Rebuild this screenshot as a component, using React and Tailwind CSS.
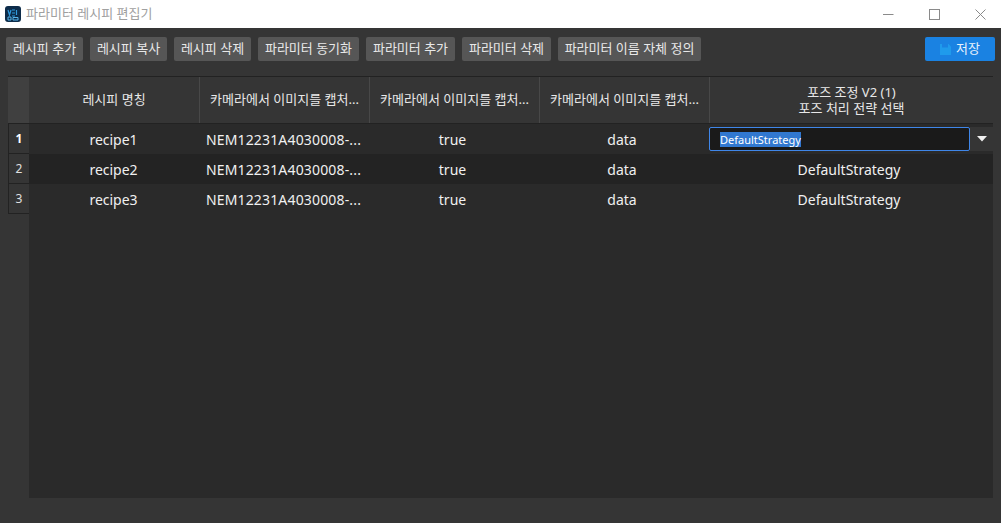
import React from "react";

const FONT = "[font-family:'Noto_Sans','Noto_Sans_CJK_KR',sans-serif]";
const tools = [
  ["레시피 추가", "w-[77px]"],
  ["레시피 복사", "w-[77px]"],
  ["레시피 삭제", "w-[77px]"],
  ["파라미터 동기화", "w-[101px]"],
  ["파라미터 추가", "w-[89px]"],
  ["파라미터 삭제", "w-[89px]"],
  ["파라미터 이름 자체 정의", "w-[143px]"],
];
const heads = ["레시피 명칭", "카메라에서 이미지를 캡처...", "카메라에서 이미지를 캡처...", "카메라에서 이미지를 캡처..."];
const rows = ["recipe1", "recipe2", "recipe3"];

function Cell({ children, w = "w-[170px]", pad = "" }) {
  return <div className={`${w} ${pad} shrink-0 flex items-center justify-center text-[14px] text-[#f0f0f0]`}>{children}</div>;
}

function Row({ n, active, alt }) {
  return (
    <div className={`flex h-[30px] ${alt ? "bg-[#232323]" : "bg-[#2a2a2a]"}`}>
      <Cell w="w-[170px]" pad="pr-[1px]">{rows[n]}</Cell>
      <Cell pad="pr-[1px]"><span className="tracking-[0.16px]">NEM12231A4030008-...</span></Cell>
      <Cell pad="pr-[3px]">true</Cell>
      <Cell pad="pr-[4px]">data</Cell>
      {active ? (
        <div className="w-[284px] shrink-0 flex items-center">
          <div className="w-[261px] h-[24px] bg-[#1a1a1a] border border-[#3f86e8] rounded-[2px] flex items-center pl-[10px] text-[11px] text-white">
            <span className="bg-[#3178d0] leading-[15px]">DefaultStrategy</span>
          </div>
          <div className="flex-1 h-[24px] bg-[#353535] flex items-center justify-center">
            <svg width="10" height="6" viewBox="0 0 10 6"><path d="M0 0h10L5 5.500z" fill="#f0f0f0" /></svg>
          </div>
        </div>
      ) : (
        <Cell w="w-[284px]" pad="pr-[4px]">DefaultStrategy</Cell>
      )}
    </div>
  );
}

export default function App() {
  return (
    <div className={`w-[1001px] h-[523px] flex flex-col overflow-hidden bg-[#353535] ${FONT}`}>
      <div className="h-[28px] shrink-0 bg-white flex items-center">
        <svg className="ml-[5px]" width="16" height="16" viewBox="0 0 16 16">
          <rect width="16" height="16" rx="3" fill="#0d2c4a" />
          <path d="M3 4l1.500 5L6 4M7 4h3M7 7h3M7 10h3M11.500 4v5" stroke="#2f9be0" strokeWidth="1.200" fill="none" />
          <path d="M3 11h3v3H3zM8 11.500h5v2.500H8z" stroke="#58b4ea" strokeWidth="1" fill="none" />
        </svg>
        <span className="ml-[5px] text-[13px] text-[#a0a0a0]">파라미터 레시피 편집기</span>
        <div className="ml-auto flex items-center h-full">
          <svg className="mr-[35px]" width="11" height="11" viewBox="0 0 11 11"><path d="M0 5.500h10.500" stroke="#8a8a8a" /></svg>
          <svg className="mr-[35px]" width="11" height="11" viewBox="0 0 11 11"><rect x=".5" y=".5" width="10" height="10" fill="none" stroke="#8a8a8a" /></svg>
          <svg className="mr-[15px]" width="11" height="11" viewBox="0 0 11 11"><path d="M.5.500l10 10M10.500.5l-10 10" stroke="#8a8a8a" /></svg>
        </div>
      </div>

      <div className="h-[48px] shrink-0 flex items-start pt-[9px] pl-[6px] pr-[6px] gap-[7px]">
        {tools.map(([t, w]) => (
          <div key={t} className={`${w} h-[24px] shrink-0 rounded-[2px] bg-[#565656] flex items-center justify-center text-[13px] text-[#e8e8e8] whitespace-nowrap`}>{t}</div>
        ))}
        <div className="ml-auto w-[70px] h-[24px] rounded-[2px] bg-[#1a82e2] flex items-center justify-center gap-[5px] text-[13px] text-[#e8f2fc]">
          <svg width="11" height="11" viewBox="0 0 11 11"><path d="M0 0h8.500L11 2.500V11H0z" fill="#1f9bec" /><path d="M2 0h6v3.500H2z" fill="#1a82e2" /></svg>
          저장
        </div>
      </div>

      <div className="ml-[8px] w-[985px] h-[422px] border-t border-[#222222] flex">
        <div className="w-[21px] shrink-0 flex flex-col">
          <div className="h-[47px] bg-[#404040] border-b border-[#222222]" />
          {["1", "2", "3"].map((n, i) => (
            <div key={n} className={`h-[30px] bg-[#353535] border-b border-l border-[#222222] flex items-center justify-center text-[12px] ${i === 0 ? "font-bold text-white" : "text-[#e0e0e0]"}`}>{n}</div>
          ))}
        </div>
        <div className="flex-1 flex flex-col bg-[#2a2a2a]">
          <div className="h-[47px] shrink-0 flex bg-[#353535] border-b border-[#222222]">
            <div className="w-[171px] shrink-0 border-r border-[#484848] flex items-center justify-center text-[13px] text-[#e8e8e8] whitespace-nowrap">{heads[0]}</div>
            {heads.slice(1).map((h, i) => (
              <div key={i} className="w-[170px] shrink-0 border-r border-[#484848] flex items-center justify-center text-[13px] text-[#e8e8e8] whitespace-nowrap">{h}</div>
            ))}
            <div className="flex-1 flex items-center justify-center text-center text-[13px] leading-[16px] text-[#e8e8e8]">포즈 조정 V2 (1)<br />포즈 처리 전략 선택</div>
          </div>
          <Row n={0} active />
          <Row n={1} alt />
          <Row n={2} />
        </div>
      </div>
    </div>
  );
}
